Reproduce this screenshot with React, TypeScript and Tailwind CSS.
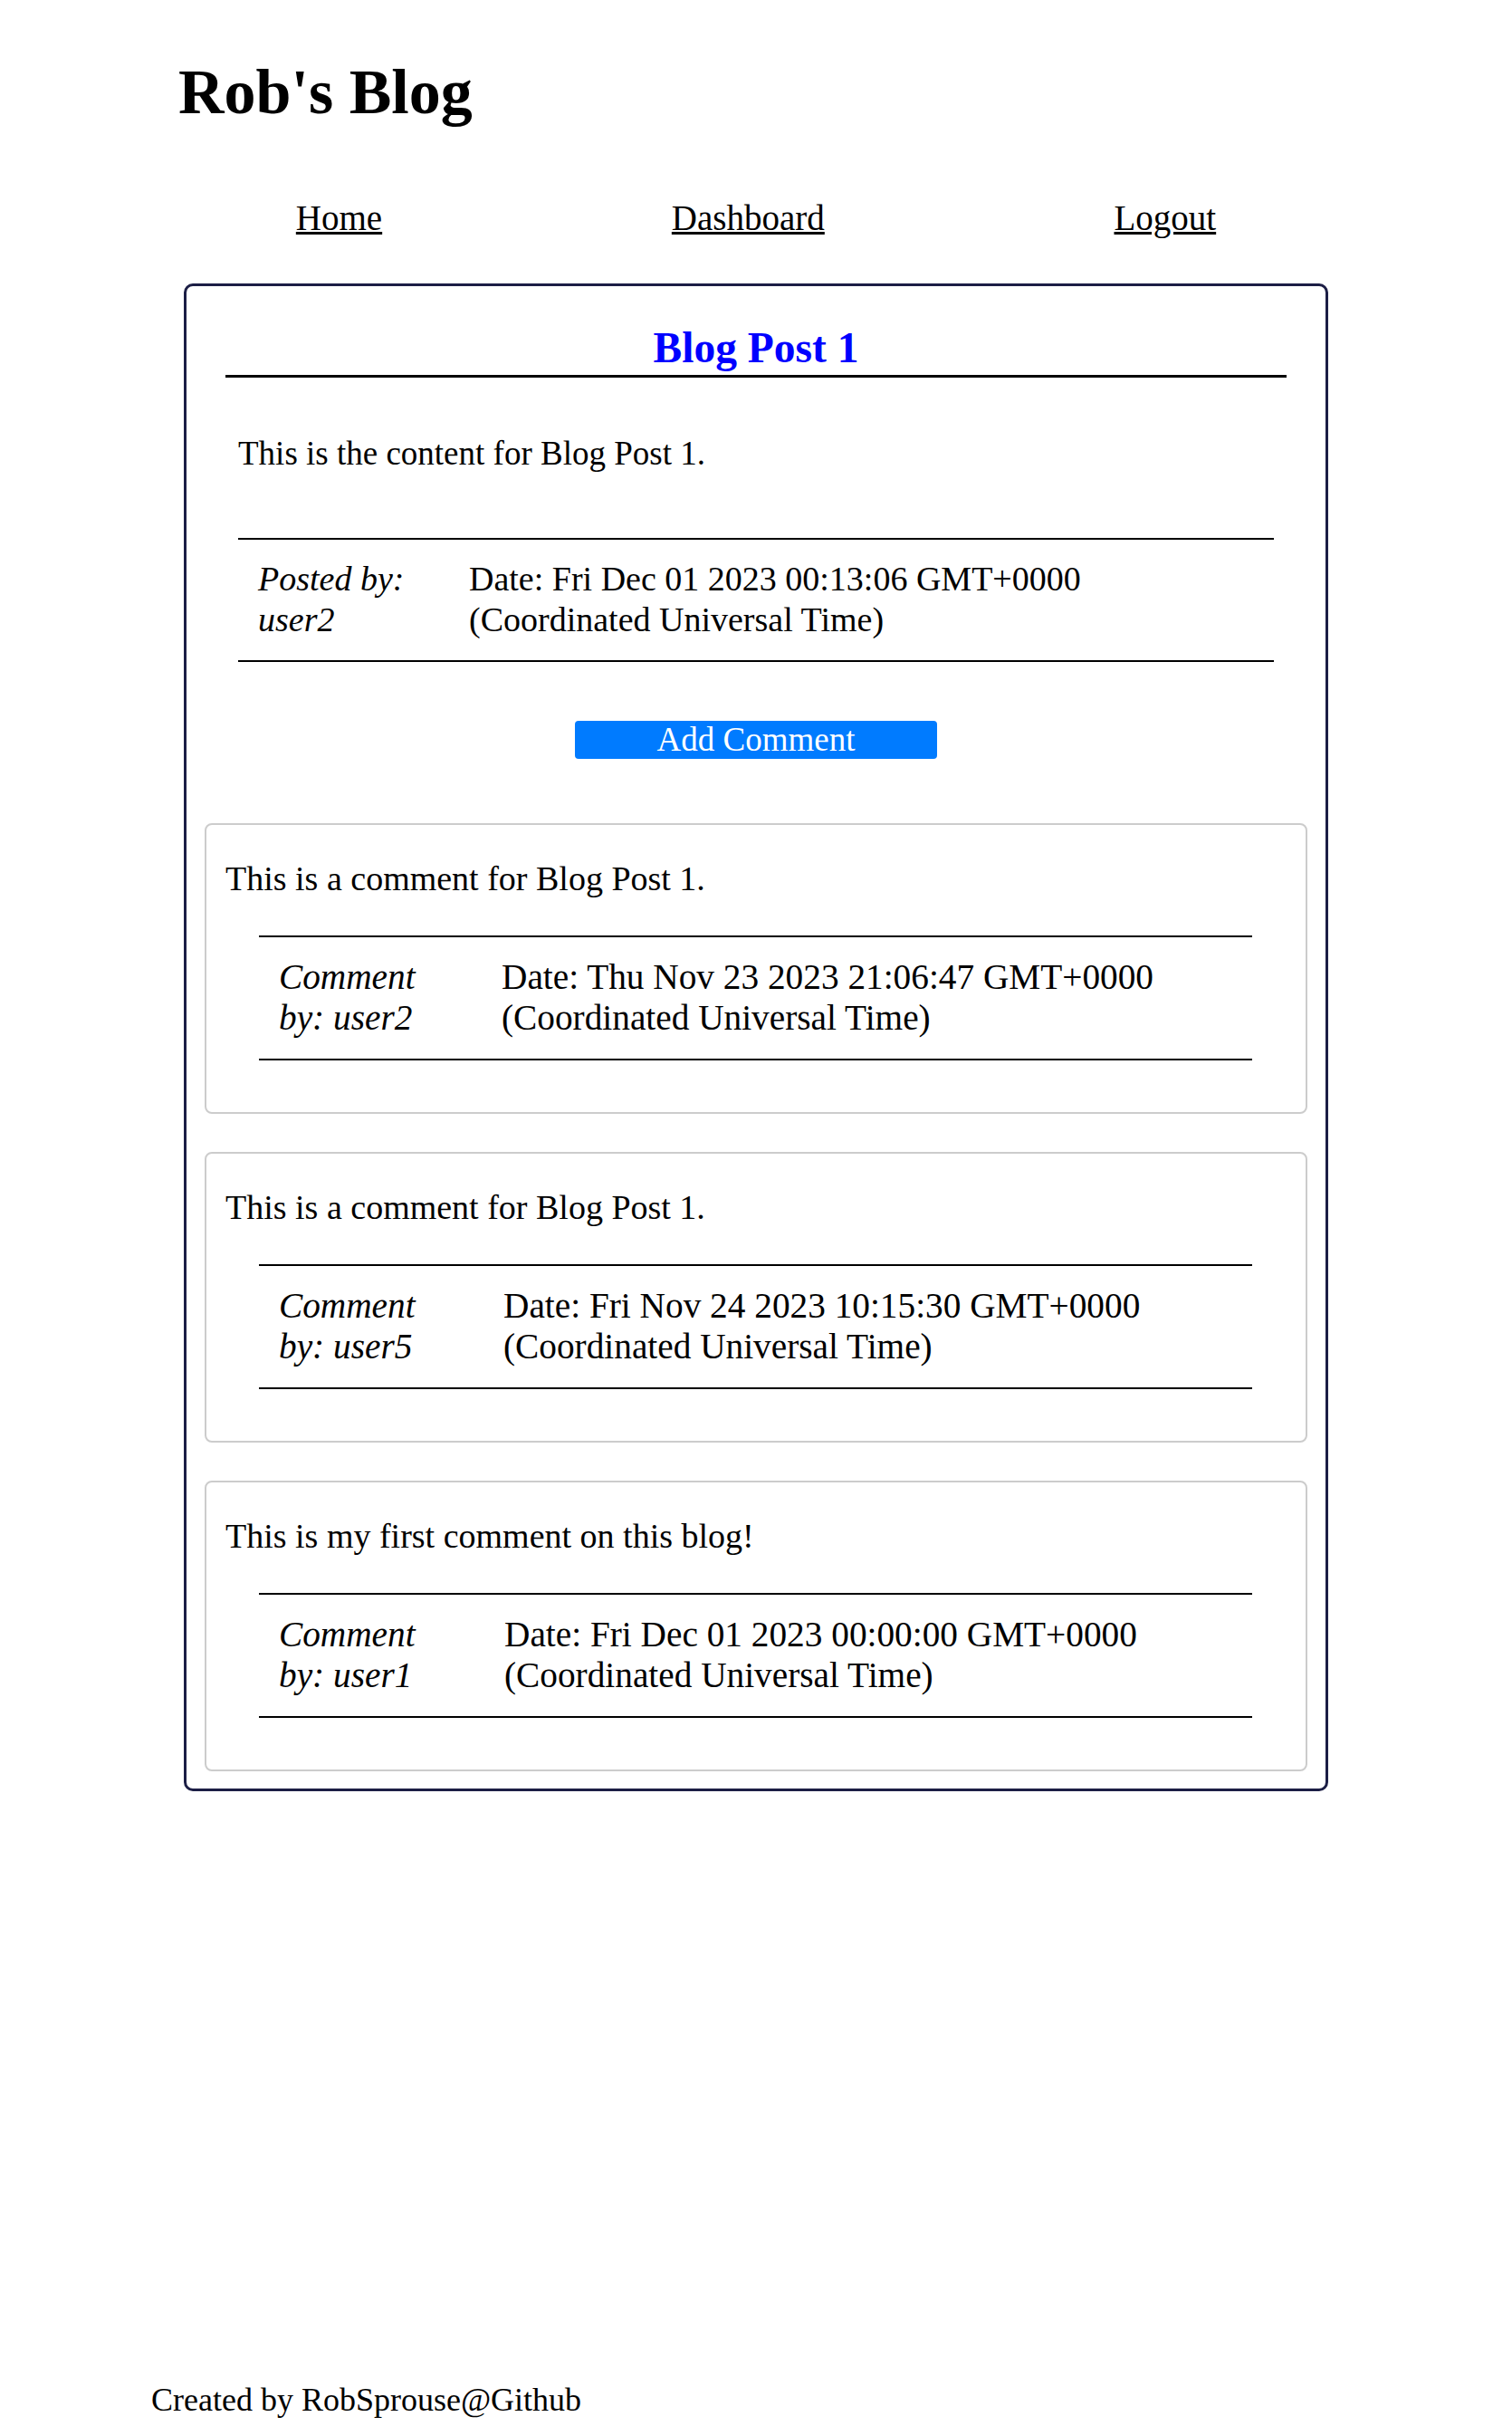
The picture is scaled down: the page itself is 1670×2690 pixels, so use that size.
import React from "react";

type Comment = {
  text: string;
  user: string;
  date: string;
  colClass: string;
};

const comments: Comment[] = [
  {
    text: "This is a comment for Blog Post 1.",
    user: "user2",
    date: "Date: Thu Nov 23 2023 21:06:47 GMT+0000",
    colClass: "w-[246px] shrink-0 italic",
  },
  {
    text: "This is a comment for Blog Post 1.",
    user: "user5",
    date: "Date: Fri Nov 24 2023 10:15:30 GMT+0000",
    colClass: "w-[248px] shrink-0 italic",
  },
  {
    text: "This is my first comment on this blog!",
    user: "user1",
    date: "Date: Fri Dec 01 2023 00:00:00 GMT+0000",
    colClass: "w-[249px] shrink-0 italic",
  },
];

function CommentCard({ c }: { c: Comment }) {
  return (
    <div className="border-2 border-[#cccccc] rounded-[8px] pt-[37px] pb-[57px] pl-[21px]">
      <p className="text-[38px] leading-[44px] whitespace-nowrap">{c.text}</p>
      <div className="mt-[41px] ml-[37px] w-[1097px] border-y-2 border-black pt-[22px] pb-[22px] pl-[22px] flex text-[39.3px] leading-[45px]">
        <div className={c.colClass}>
          <span className="block whitespace-nowrap">Comment</span>
          <span className="block whitespace-nowrap">by: {c.user}</span>
        </div>
        <div>
          <span className="block whitespace-nowrap">{c.date}</span>
          <span className="block whitespace-nowrap">(Coordinated Universal Time)</span>
        </div>
      </div>
    </div>
  );
}

export default function App() {
  return (
    <div className="min-h-screen bg-white text-black font-['Liberation_Serif','Times_New_Roman',serif] flex flex-col">
      <div className="w-[1336px] mx-auto flex flex-col flex-1 pb-[19px]">
        <header>
          <h1 className="pl-[30px] pt-[62px] text-[70px] leading-[80px] font-bold">Rob's Blog</h1>
          <nav className="mt-[76px] flex justify-around text-[39px] leading-[45px]">
            <a href="#" className="underline text-black">Home</a>
            <a href="#" className="underline text-black">Dashboard</a>
            <a href="#" className="underline text-black">Logout</a>
          </nav>
        </header>

        <main className="mt-[50px] w-[1264px] mx-auto border-[3px] border-[#1c1e45] rounded-[10px] pt-[38px] pb-[19px]">
          <h2 className="mx-[43px] border-b-[3px] border-black text-center text-[47.5px] leading-[60px] font-bold text-[#0000ff]">
            Blog Post 1
          </h2>
          <div className="ml-[57px] w-[1144px]">
            <p className="mt-[62px] text-[37px] leading-[44px]">This is the content for Blog Post 1.</p>
            <div className="mt-[71px] border-y-2 border-black pt-[21px] pb-[22px] pl-[22px] flex text-[38px] leading-[45px]">
              <div className="w-[233px] shrink-0 italic">
                <span className="block whitespace-nowrap">Posted by:</span>
                <span className="block whitespace-nowrap">user2</span>
              </div>
              <div>
                <span className="block whitespace-nowrap">Date: Fri Dec 01 2023 00:13:06 GMT+0000</span>
                <span className="block whitespace-nowrap">(Coordinated Universal Time)</span>
              </div>
            </div>
          </div>

          <div className="mt-[65px] flex justify-center">
            <button
              type="button"
              className="w-[400px] h-[42px] bg-[#007bff] text-white text-[37px] leading-[42px] rounded-[4px]"
            >
              Add Comment
            </button>
          </div>

          <div className="mt-[71px] mx-[20px] flex flex-col gap-[42px]">
            {comments.map((c, i) => (
              <CommentCard key={i} c={c} />
            ))}
          </div>
        </main>

        <footer className="mt-auto text-[36px] leading-[41px] whitespace-nowrap">Created by RobSprouse@Github</footer>
      </div>
    </div>
  );
}
